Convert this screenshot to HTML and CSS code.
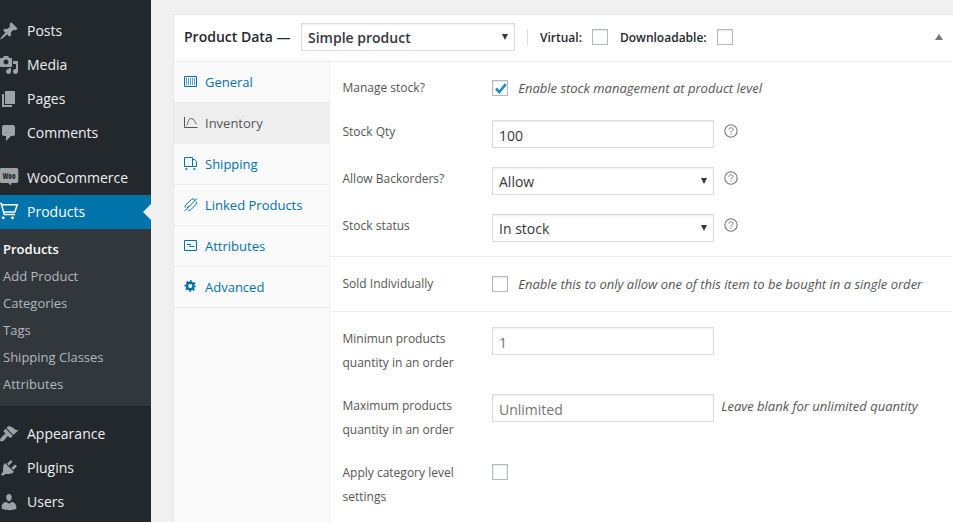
FILE: index.html
```html
<!DOCTYPE html>
<html lang="en">
<head>
<meta charset="utf-8">
<title>Edit Product</title>
<link rel="stylesheet" href="styles.css">
</head>
<body>
<svg class="defs" width="0" height="0" aria-hidden="true">
  <symbol id="help" viewBox="0 0 14 14"><circle cx="7" cy="7" r="6.2" fill="none" stroke="currentColor" stroke-width="1.1"/><path d="M4.9 5.7C4.9 3.1 9.1 3.1 9.1 5.6C9.1 7 7 7 7 8.5M7 9.5v1.3" fill="none" stroke="currentColor"/></symbol>
</svg>
<div class="app">
  <nav class="sidebar">
    <a class="item"><svg class="icon" viewBox="0 0 20 20"><path d="M10.44 3.02l1.82-1.82 6.36 6.35-1.83 1.82c-1.05-.68-2.48-.57-3.41.36l-.75.75c-.92.93-1.04 2.35-.35 3.41l-1.83 1.82-2.41-2.41-2.8 2.79c-.42.42-3.38 2.71-3.8 2.29s1.86-3.39 2.28-3.81l2.79-2.79L4.1 9.36l1.83-1.82c1.05.69 2.48.57 3.4-.36l.75-.75c.93-.92 1.05-2.35.36-3.41z"/></svg>Posts</a>
    <a class="item"><svg class="icon" viewBox="0 0 20 20"><path d="M13 11V4c0-.55-.45-1-1-1h-1.67L9 1H5L3.67 3H2c-.55 0-1 .45-1 1v7c0 .55.45 1 1 1h10c.55 0 1-.45 1-1zM7 4.5c1.38 0 2.5 1.12 2.5 2.5S8.38 9.5 7 9.5 4.5 8.38 4.5 7 5.62 4.5 7 4.5zM14 6h5v10.5c0 1.38-1.12 2.5-2.5 2.5S14 17.88 14 16.5s1.12-2.5 2.5-2.5c.17 0 .34.02.5.05V9h-3V6zm-4 8.05V13h2v3.5c0 1.38-1.12 2.5-2.5 2.5S7 17.88 7 16.5 8.12 14 9.5 14c.17 0 .34.02.5.05z"/></svg>Media</a>
    <a class="item"><svg class="icon" viewBox="0 0 20 20"><path d="M6 15V2h10v13H6zm-1 1h8v2H3V5h2v11z"/></svg>Pages</a>
    <a class="item"><svg class="icon" viewBox="0 0 20 20"><path d="M5 2h9c1.1 0 2 .9 2 2v7c0 1.1-.9 2-2 2h-2l-5 5v-5H5c-1.1 0-2-.9-2-2V4c0-1.1.9-2 2-2z"/></svg>Comments</a>
    <div class="gap"></div>
    <a class="item"><svg class="icon" viewBox="0 0 20 20"><path d="M2.5 0H17.5a1.8 1.8 0 0 1 1.8 1.8V13.2a1.8 1.8 0 0 1-1.8 1.8H12.5l-.8 2.4L9.3 15H2.5A1.8 1.8 0 0 1 .7 13.2V1.8A1.8 1.8 0 0 1 2.5 0z"/><text class="woo" x="3.5" y="10.5" textLength="13" lengthAdjust="spacingAndGlyphs">Woo</text></svg>WooCommerce</a>
    <a class="item current"><svg class="icon line" viewBox="0 0 20 20"><path d="M0 1.5H2.3L5.2 12.5H16M3 2.7H18.3L15.8 10H4.8"/><circle cx="4.2" cy="15.8" r="1"/><circle cx="13.5" cy="15.8" r="1"/></svg>Products</a>
    <div class="submenu">
      <a class="active">Products</a>
      <a>Add Product</a>
      <a>Categories</a>
      <a>Tags</a>
      <a>Shipping Classes</a>
      <a>Attributes</a>
    </div>
    <div class="gap"></div>
    <a class="item"><svg class="icon" viewBox="0 0 20 20"><path d="M14.48 11.06L7.41 3.99l1.5-1.5c.5-.56 2.3-.47 3.51.32 1.21.8 1.43 1.28 2.91 2.1 1.18.64 2.45 1.26 4.45.85zm-.71.71L6.7 4.7 4.93 6.47c-.39.39-.39 1.02 0 1.41l1.06 1.06c.39.39.39 1.03 0 1.42-.6.6-1.43 1.11-2.21 1.69-.35.26-.7.53-1.01.84C1.43 14.23.4 16.08 1.4 17.07c.99 1 2.84-.03 4.18-1.36.31-.31.58-.66.85-1.02.57-.78 1.08-1.61 1.69-2.21.39-.39 1.02-.39 1.41 0l1.06 1.06c.39.39 1.02.39 1.41 0z"/></svg>Appearance</a>
    <a class="item"><svg class="icon" viewBox="0 0 20 20"><path d="M13.11 4.36L9.87 7.6 8 5.73l3.24-3.24c.35-.34 1.05-.2 1.56.32.52.51.66 1.21.31 1.55zm-8 1.77l.91-1.12 9.01 9.01-1.19.84c-.71.71-2.63 1.16-3.82 1.16H6.14L4.9 17.26c-.59.59-1.54.59-2.12 0-.59-.58-.59-1.53 0-2.12l1.24-1.24v-3.88c0-1.13.4-3.19 1.09-3.89zm7.26 3.97l3.24-3.24c.34-.35 1.04-.21 1.55.31.52.51.66 1.21.31 1.55l-3.24 3.25z"/></svg>Plugins</a>
    <a class="item"><svg class="icon" viewBox="0 0 20 20"><path d="M10 9.25c-2.27 0-2.73-3.44-2.73-3.44C7 4.02 7.82 2 9.97 2c2.16 0 2.98 2.02 2.71 3.81 0 0-.41 3.44-2.68 3.44zm0 2.57L12.72 10c2.39 0 4.52 2.33 4.52 4.53v2.49s-3.65 1.13-7.24 1.13c-3.65 0-7.24-1.13-7.24-1.13v-2.49c0-2.25 1.94-4.48 4.47-4.48z"/></svg>Users</a>
  </nav>

  <main class="panel">
    <header class="head">
      <span class="title">Product Data —</span>
      <select class="field type"><option>Simple product</option></select>
      <span class="rule"></span>
      <label class="flag virtual">Virtual: <input type="checkbox"></label>
      <label class="flag download">Downloadable: <input type="checkbox"></label>
      <span class="toggle"></span>
    </header>
    <div class="body">
      <div class="tabs">
        <a class="tab"><svg viewBox="0 0 14 14"><path d="M.5 1.5h12v10H.5z"/><path d="M2.5 3v7M4.500 3v7M6.500 3v7M8.500 3v7M10.500 3v7" stroke-width=".8" opacity=".8"/></svg>General</a>
        <a class="tab selected"><svg viewBox="0 0 14 14"><path d="M.5 1v10.500H13.500"/><path d="M2.500 9.500C4.500 8 3.500 2.500 7.300 2.500S9.800 7 13 8" stroke-width=".9"/></svg>Inventory</a>
        <a class="tab"><svg viewBox="0 0 14 14"><path d="M.5.5h8v9h-8zM8.500 2.500h2.300L12.500 4.500v5h-4"/><path d="M1.300 12h2M9.300 12h2" stroke-width="1.600"/></svg>Shipping</a>
        <a class="tab"><svg viewBox="0 0 14 14"><path d="M.3 13.300L7.300 6.300M1 9.500Q.8 7.800 2 6.600L7.500 1.500Q9.300.2 10.300 1.300T9.300 4.200L7.300 6.300M3.600 10Q3.400 9 4.500 8M4 12.300Q5.200 13.300 6.800 11.700L11.800 6.700Q13.200 5 12 3.600M10.500 3L13.200.3"/></svg>Linked Products</a>
        <a class="tab"><svg viewBox="0 0 14 14"><path d="M.5 1.500h12v10H.5z"/><path d="M3 5.500h4M5 7.500h5.500" stroke-width="1.200"/></svg>Attributes</a>
        <a class="tab"><svg viewBox="0 0 14 14"><circle cx="6.300" cy="6" r="3.300" stroke-width="2.400"/><circle cx="6.300" cy="6" r="4.900" stroke-width="1.700" stroke-dasharray="1.924 1.924" stroke-dashoffset=".962"/></svg>Advanced</a>
      </div>
      <form class="fields">
        <section>
          <div class="row r-check"><span class="label">Manage stock?</span><input type="checkbox" checked><span class="note">Enable stock management at product level</span></div>
          <div class="row"><span class="label">Stock Qty</span><input class="field" type="text" value="100"><svg class="help"><use href="#help"/></svg></div>
          <div class="row"><span class="label">Allow Backorders?</span><select class="field"><option>Allow</option></select><svg class="help"><use href="#help"/></svg></div>
          <div class="row"><span class="label">Stock status</span><select class="field"><option>In stock</option></select><svg class="help"><use href="#help"/></svg></div>
        </section>
        <section>
          <div class="row r-single"><span class="label">Sold Individually</span><input type="checkbox"><span class="note">Enable this to only allow one of this item to be bought in a single order</span></div>
        </section>
        <section>
          <div class="row r-tall"><span class="label">Minimun products quantity in an order</span><input class="field" type="text" placeholder="1"></div>
          <div class="row r-tall"><span class="label">Maximum products quantity in an order</span><input class="field" type="text" placeholder="Unlimited"><span class="note after">Leave blank for unlimited quantity</span></div>
          <div class="row r-tall last"><span class="label">Apply category level settings</span><input type="checkbox"></div>
        </section>
      </form>
    </div>
  </main>
</div>
</body>
</html>
```
FILE: styles.css
```css
* { box-sizing: border-box; }
body {
  margin: 0;
  background: #f0f0f0;
  font-family: "Open Sans", sans-serif;
  font-size: 13px;
  color: #444;
}
.defs { display: none; }
.app { display: flex; height: 522px; overflow: hidden; }

/* Sidebar */
.sidebar { flex: none; width: 151px; padding-top: 14px; background: #23282d; }
.item {
  position: relative;
  display: flex;
  align-items: center;
  gap: 8px;
  height: 34px;
  color: #eee;
  font-size: 14px;
  line-height: 18px;
}
.icon { flex: none; width: 20px; height: 20px; margin-left: -1px; fill: #9ea3a8; overflow: visible; }
.woo { font: 800 8px "Open Sans", sans-serif; fill: #23282d; }
.gap { height: 11px; }
.current { background: #0073aa; color: #fff; }
.current .line { fill: #fff; stroke: #fff; }
.line path { fill: none; stroke-width: 1.5; }
.current::after {
  content: "";
  position: absolute;
  right: 0;
  top: 9px;
  border: solid transparent;
  border-width: 8px 8px 8px 0;
  border-right-color: #f0f0f0;
}
.submenu { padding: 7px 0 8px 3px; background: #32373c; }
.submenu a { display: block; height: 27px; line-height: 27px; color: #b4b9be; }
.submenu .active { color: #fff; font-weight: 600; }

/* Product data box */
.panel {
  flex: 1;
  display: flex;
  flex-direction: column;
  margin: 14px 0 0 22px;
  border: solid #e5e5e5;
  border-width: 1px 0 0 1px;
  background: #fff;
}
.head {
  flex: none;
  display: flex;
  align-items: center;
  height: 47px;
  padding: 0 10.5px 2px 10px;
  border-bottom: 1px solid #eee;
  color: #23282d;
  font-weight: 600;
}
.title { width: 117px; padding-bottom: 2px; font-size: 14px; }
.rule { width: 1px; height: 17px; margin: 0 12px; background: #ddd; }
.flag { display: flex; align-items: center; font-size: 12px; }
.virtual { width: 80px; }
.toggle {
  margin-left: auto;
  border: solid transparent;
  border-width: 0 4px 6px;
  border-bottom-color: #72777c;
}
.body { flex: 1; display: flex; }
.tabs { flex: none; width: 156px; background: #fafafa; border-right: 1px solid #eee; }
.tab {
  display: flex;
  gap: 7px;
  height: 41px;
  padding-left: 10px;
  border-bottom: 1px solid #eee;
  color: #0073aa;
  line-height: 40px;
}
.tab svg { width: 14px; height: 14px; margin-top: 13px; fill: none; stroke: currentColor; }
.selected { background: #eee; color: #555; }

/* Form */
.fields { flex: 1; }
section { padding: 14px 0 14px 12.5px; border-bottom: 1px solid #eee; }
section + section { padding-top: 15px; }
section:last-child { border: 0; }
.row { display: flex; align-items: flex-start; height: 47px; }
.row:last-child { height: 28px; }
.r-check { height: 44px; }
.row.r-single { height: 25px; }
.row.r-tall { height: 67px; }
.label { flex: none; width: 149.5px; padding-right: 22px; font-size: 12px; line-height: 24px; color: #555; }
.note { margin-left: 10.2px; font-style: italic; line-height: 24px; color: #555; }
.note.after { margin-left: 7.2px; }
.field {
  width: 222px;
  height: 28px;
  margin: 0;
  padding: 3px 6px 1px;
  border: 1px solid #ddd;
  border-radius: 0;
  background: #fff;
  box-shadow: inset 0 1px 2px rgba(0, 0, 0, .07);
  color: #32373c;
  font: 14px "Open Sans", sans-serif;
  appearance: none;
}
select.field {
  padding: 2px 6px;
  background: #fff url("data:image/svg+xml,%3Csvg xmlns='http://www.w3.org/2000/svg' width='6' height='6'%3E%3Cpath d='M0 0h6L3 6z' fill='%2332373c'/%3E%3C/svg%3E") no-repeat right 6px top 10px;
}
.field::placeholder { color: #757575; opacity: 1; }
.field.type { width: 214px; font-weight: 600; }
.help { width: 14px; height: 14px; margin: 4px 0 0 10.3px; color: #777; }
input[type="checkbox"] {
  flex: none;
  width: 16px;
  height: 16px;
  margin: 0;
  border: 1px solid #b4b9be;
  background: #fff;
  box-shadow: inset 0 1px 2px rgba(0, 0, 0, .1);
  appearance: none;
}
.row input[type="checkbox"] { margin-top: 4px; }
.row.last input[type="checkbox"] { margin-top: 3px; }
.virtual input[type="checkbox"] { margin: 0 12px 0 auto; }
.download input[type="checkbox"] { margin-left: 10px; }
input[type="checkbox"]:checked {
  background: #fff url("data:image/svg+xml,%3Csvg xmlns='http://www.w3.org/2000/svg' width='14' height='14'%3E%3Cpath d='M3 7.5L6.3 11L12.8 3.2' fill='none' stroke='%231e8cbe' stroke-width='2.6'/%3E%3C/svg%3E") no-repeat;
}
```
